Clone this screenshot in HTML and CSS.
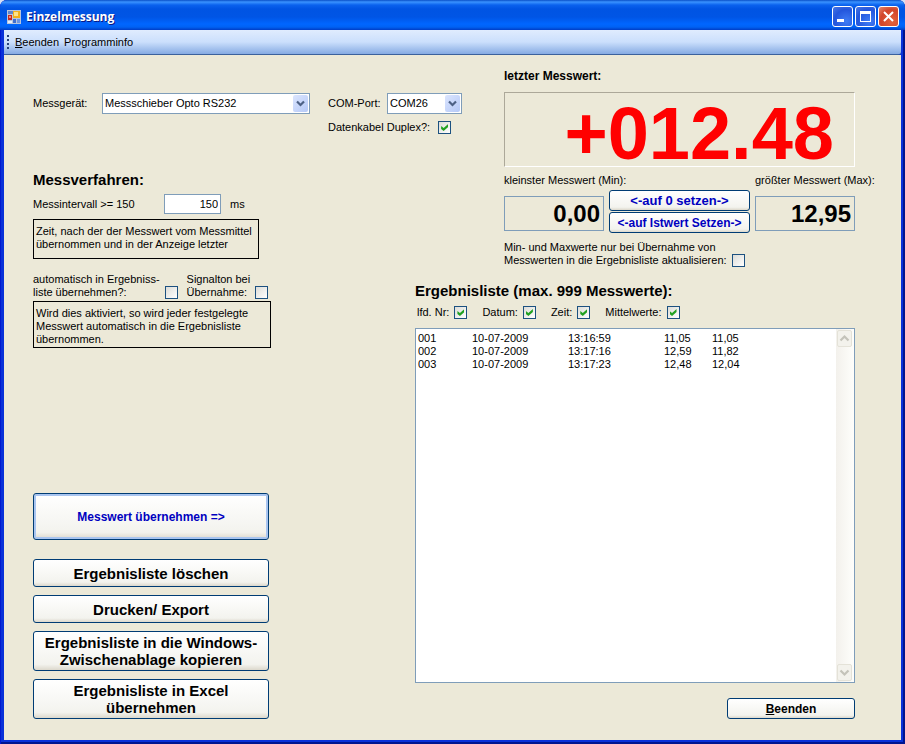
FILE: index.html
```html
<!DOCTYPE html>
<html lang="de">
<head>
<meta charset="UTF-8" />
<meta name="viewport" content="width=device-width, initial-scale=1" />
<title>Einzelmessung</title>
<link rel="stylesheet" href="styles.css">
</head>
<body>

<div class="window">
  <header class="titlebar">
    <svg class="app-icon" width="14" height="14" viewBox="0 0 14 14">
      <rect x="0" y="0" width="14" height="14" fill="#b9c6dc" />
      <rect x="1" y="1" width="5" height="3" fill="#5f86cf" />
      <rect x="1" y="5" width="4" height="5" fill="#c8281e" />
      <rect x="2" y="6" width="2" height="2" fill="#f0897c" />
      <rect x="6" y="1" width="7" height="7" fill="#f2b21c" />
      <rect x="7" y="2" width="4" height="4" fill="#fde28a" />
      <rect x="1" y="11" width="4" height="2" fill="#e8eefb" />
      <rect x="6" y="9" width="3" height="4" fill="#3f6fd0" />
      <rect x="10" y="9" width="3" height="4" fill="#6c96e4" />
    </svg>
    <h1>Einzelmessung</h1>
    <div class="window-buttons">
      <button type="button" aria-label="Minimieren">
        <svg width="19" height="19" viewBox="0 0 19 19"><rect x="4" y="12" width="7" height="3" fill="#fff" /></svg>
      </button>
      <button type="button" aria-label="Maximieren">
        <svg width="19" height="19" viewBox="0 0 19 19"><path d="M4 4h11v11H4zM5 7v7h9V7z" fill="#fff" fill-rule="evenodd" /></svg>
      </button>
      <button type="button" class="close" aria-label="Schließen">
        <svg width="19" height="19" viewBox="0 0 19 19"><path d="M5 5l9 9M14 5l-9 9" stroke="#fff" stroke-width="2" fill="none" /></svg>
      </button>
    </div>
  </header>

  <nav class="menubar">
    <span class="grip"></span>
    <button type="button"><u>B</u>eenden</button>
    <button type="button">Programminfo</button>
  </nav>

  <main class="content">
    <section class="device">
      <div class="field">
        <label for="geraet" class="device-label">Messgerät:</label>
        <span class="combo combo-wide">
          <select id="geraet"><option>Messschieber Opto RS232</option></select>
          <svg class="arrow" width="15" height="17" viewBox="0 0 15 17"><path d="M4 6.5l3.5 3.5L11 6.5" fill="none" stroke="#4d6185" stroke-width="2.2" /></svg>
        </span>
      </div>
      <div class="port">
        <div class="field">
          <label for="port" class="port-label">COM-Port:</label>
          <span class="combo">
            <select id="port"><option>COM26</option></select>
            <svg class="arrow" width="15" height="17" viewBox="0 0 15 17"><path d="M4 6.5l3.5 3.5L11 6.5" fill="none" stroke="#4d6185" stroke-width="2.2" /></svg>
          </span>
        </div>
        <label class="check">Datenkabel Duplex?: <input type="checkbox" checked></label>
      </div>
    </section>

    <section class="readings">
      <h3>letzter Messwert:</h3>
      <output class="display">+012.48</output>
      <div class="minmax">
        <label for="min">kleinster Messwert (Min):</label>
        <label for="max" class="max-label">größter Messwert (Max):</label>
        <input type="text" id="min" class="value" value="0,00" readonly>
        <div class="reset">
          <button type="button" class="btn zero">&lt;-auf 0 setzen-&gt;</button>
          <button type="button" class="btn">&lt;-auf Istwert Setzen-&gt;</button>
        </div>
        <input type="text" id="max" class="value" value="12,95" readonly>
      </div>
      <label class="check two-line">
        <span>Min- und Maxwerte nur bei Übernahme von<br>Messwerten in die Ergebnisliste aktualisieren:</span>
        <input type="checkbox">
      </label>
    </section>

    <section class="procedure">
      <h2>Messverfahren:</h2>
      <div class="field">
        <label for="intervall" class="interval-label">Messintervall &gt;= 150</label>
        <input type="text" id="intervall" class="interval" value="150">
        <span class="unit">ms</span>
      </div>
      <p class="hint hint-interval">Zeit, nach der der Messwert vom Messmittel<br>übernommen und in der Anzeige letzter</p>
      <div class="auto">
        <label class="check two-line">
          <span>automatisch in Ergebniss-<br>liste übernehmen?:</span>
          <input type="checkbox">
        </label>
        <label class="check two-line">
          <span>Signalton bei<br>Übernahme:</span>
          <input type="checkbox">
        </label>
      </div>
      <p class="hint hint-auto">Wird dies aktiviert, so wird jeder festgelegte<br>Messwert automatisch in die Ergebnisliste<br>übernommen.</p>

      <div class="actions">
        <button type="button" class="btn primary">Messwert übernehmen =&gt;</button>
        <button type="button" class="btn big">Ergebnisliste löschen</button>
        <button type="button" class="btn big">Drucken/ Export</button>
        <button type="button" class="btn big tall">Ergebnisliste in die Windows-<br>Zwischenablage kopieren</button>
        <button type="button" class="btn big tall">Ergebnisliste in Excel<br>übernehmen</button>
      </div>
    </section>

    <section class="results">
      <h2>Ergebnisliste (max. 999 Messwerte):</h2>
      <div class="columns">
        <label class="check">lfd. Nr: <input type="checkbox" checked></label>
        <label class="check">Datum: <input type="checkbox" checked></label>
        <label class="check">Zeit: <input type="checkbox" checked></label>
        <label class="check">Mittelwerte: <input type="checkbox" checked></label>
      </div>
      <div class="listbox">
        <table>
          <tr><td class="nr">001</td><td>10-07-2009</td><td>13:16:59</td><td class="num">11,05</td><td class="num">11,05</td></tr>
          <tr><td class="nr">002</td><td>10-07-2009</td><td>13:17:16</td><td class="num">12,59</td><td class="num">11,82</td></tr>
          <tr><td class="nr">003</td><td>10-07-2009</td><td>13:17:23</td><td class="num">12,48</td><td class="num">12,04</td></tr>
        </table>
        <div class="scrollbar">
          <button type="button" aria-label="Nach oben">
            <svg width="13" height="15" viewBox="0 0 13 15"><path d="M2.5 9.5l4-4 4 4" fill="none" stroke="#c4c3ba" stroke-width="2.2" /></svg>
          </button>
          <button type="button" aria-label="Nach unten">
            <svg width="13" height="15" viewBox="0 0 13 15"><path d="M2.5 5.5l4 4 4-4" fill="none" stroke="#c4c3ba" stroke-width="2.2" /></svg>
          </button>
        </div>
      </div>
      <button type="button" class="btn quit"><u>B</u>eenden</button>
    </section>
  </main>
</div>

</body>
</html>
```
FILE: styles.css
```css
* {
  box-sizing: border-box;
}
body {
  margin: 0;
  background: #d6e0f4;
  font-family: "Liberation Sans", Arial, sans-serif;
  font-size: 11px;
  line-height: 13px;
  color: #000;
}
button, input, select {
  font: inherit;
  color: inherit;
  margin: 0;
}
h1, h2, h3, p {
  margin: 0;
}

/* window frame */
.window {
  display: flex;
  flex-direction: column;
  min-height: 100vh;
  padding: 0 4px 4px;
  border-radius: 7px 7px 0 0;
  background: #0831d9;
  box-shadow: inset 1px 0 #0019cf, inset -2px -2px #001590;
}
.titlebar {
  display: flex;
  align-items: center;
  height: 30px;
  margin: 0 -4px;
  padding: 3px 6px 0 7px;
  border-radius: 7px 7px 0 0;
  background: linear-gradient(#0950c8 0, #3a93ff 2px, #0a62ee 5px, #0054e3 9px, #0055e5 17px, #0066ff 24px, #0062f4 27px, #003dc5 30px);
}
.app-icon {
  margin-right: 5px;
}
.titlebar h1 {
  flex: 1;
  font-family: "Open Sans", sans-serif;
  font-size: 12px;
  line-height: 16px;
  color: #fff;
  text-shadow: 1px 1px #0a1883;
}
.window-buttons {
  display: flex;
  gap: 2px;
}
.window-buttons button {
  width: 21px;
  height: 21px;
  padding: 0;
  border: 1px solid #fff;
  border-radius: 3px;
  background: radial-gradient(circle at 70% 75%, #3f7cf5, #2456dc 60%, #4a78e4);
}
.window-buttons .close {
  background: radial-gradient(circle at 70% 75%, #e4633c, #d2452a 60%, #e58a70);
}
.window-buttons svg {
  display: block;
}

.menubar {
  display: flex;
  align-items: center;
  height: 25px;
  padding-left: 3px;
  border-bottom: 1px solid #3b619c;
  border-radius: 0 0 3px 0;
  background: linear-gradient(#e0ecfe, #cbdffc 50%, #86abe3);
}
.grip {
  width: 2px;
  height: 14px;
  margin-right: 6px;
  background: repeating-linear-gradient(#27417a 0 2px, transparent 2px 4px);
}
.menubar button {
  margin-right: 5px;
  padding: 0;
  border: 0;
  background: none;
}

.content {
  flex: 1;
  display: grid;
  grid-template-columns: 382px 89px 1fr;
  grid-template-rows: 102px auto 1fr;
  padding: 14px 46px 21px 29px;
  background: #ece9d8;
}
h2 {
  font-size: 15px;
  line-height: 18px;
}
h3 {
  font-size: 12px;
  line-height: 14px;
}

/* controls */
.field {
  display: flex;
  align-items: center;
}
.check {
  display: inline-flex;
  align-items: center;
  gap: 8px;
}
.two-line {
  align-items: flex-end;
  gap: 5px;
}
input[type="checkbox"] {
  appearance: none;
  flex: none;
  width: 13px;
  height: 13px;
  border: 1px solid #1c5180;
  background: linear-gradient(135deg, #dcdcd7, #fff);
}
input[type="checkbox"]:checked::before {
  content: "";
  display: block;
  width: 7px;
  height: 7px;
  margin: 2px;
  background: #21a121;
  clip-path: polygon(0 29%, 36% 57%, 100% 0, 100% 43%, 36% 100%, 0 71%);
}
.combo {
  position: relative;
  width: 75px;
  height: 21px;
}
.combo-wide {
  width: 208px;
}
.combo select {
  appearance: none;
  width: 100%;
  height: 100%;
  padding: 0 18px 0 2px;
  border: 1px solid #7f9db9;
  border-radius: 0;
  background: #fff;
}
.arrow {
  position: absolute;
  top: 2px;
  right: 2px;
  border-radius: 2px;
  background: linear-gradient(135deg, #dbe5fe, #b5c9f7);
  pointer-events: none;
}
.btn {
  padding: 0 4px;
  border: 1px solid #003c74;
  border-radius: 3px;
  background: linear-gradient(#fff, #f3f3ee 85%, #dcd8cc);
  font-size: 12px;
  font-weight: bold;
  line-height: 14px;
}

.device {
  grid-area: 1 / 1 / 2 / 3;
  display: flex;
  align-items: flex-start;
  gap: 18px;
  padding-top: 24px;
}
.device-label {
  width: 69px;
}
.port-label {
  width: 59px;
}
.port .check {
  margin-top: 7px;
}

.readings {
  grid-area: 1 / 3 / 3 / 4;
  padding-bottom: 15px;
}
.display {
  display: block;
  height: 75px;
  margin-top: 9px;
  padding: 9px 20px 0 0;
  border: 1px solid;
  border-color: #aca899 #fff #fff #aca899;
  font-size: 74px;
  font-weight: bold;
  line-height: 64px;
  text-align: right;
  color: #f00;
}
.minmax {
  display: grid;
  grid-template-columns: 100px 1fr 100px;
  column-gap: 5px;
  row-gap: 3px;
  align-items: end;
  margin: 7px 0 8px;
  white-space: nowrap;
}
.max-label {
  grid-column: 3;
}
.value {
  width: 100%;
  height: 35px;
  margin-bottom: 2px;
  padding: 0 3px;
  border: 1px solid #7f9db9;
  background: transparent;
  font-size: 24px;
  font-weight: bold;
  text-align: right;
}
.reset {
  display: grid;
  gap: 1px;
}
.reset .btn {
  height: 21px;
  color: #0000c0;
}
.reset .zero {
  font-size: 13px;
}

.procedure {
  grid-area: 2 / 1 / 4 / 2;
  display: flex;
  flex-direction: column;
  align-items: flex-start;
}
.procedure .field {
  margin: 5px 0;
}
.interval-label {
  width: 131px;
}
.interval {
  width: 57px;
  height: 20px;
  padding: 0 2px;
  border: 1px solid #7f9db9;
  background: #fff;
  text-align: right;
}
.unit {
  margin-left: 9px;
}
.hint {
  padding: 5px 2px 1px;
  border: 1px solid #000;
  white-space: nowrap;
}
.hint-interval {
  width: 226px;
  height: 40px;
}
.auto {
  display: flex;
  gap: 9px;
  margin: 14px 0 2px;
}
.hint-auto {
  width: 238px;
}
.actions {
  display: flex;
  flex-direction: column;
  gap: 8px;
  width: 236px;
  margin-top: auto;
}
.primary {
  height: 47px;
  margin-bottom: 11px;
  color: #0000c0;
  box-shadow: inset 0 0 0 2px #a9c5f0;
}
.big {
  height: 28px;
  font-size: 15px;
  line-height: 17px;
  white-space: nowrap;
}
.tall {
  height: 40px;
}

.results {
  grid-area: 3 / 2 / 4 / 4;
  display: flex;
  flex-direction: column;
}
.columns {
  display: flex;
  gap: 15px;
  margin: 6px 0 9px;
  padding-left: 2px;
}
.columns .check {
  gap: 5px;
}
.listbox {
  flex: 1;
  display: flex;
  justify-content: space-between;
  align-items: flex-start;
  border: 1px solid #7f9db9;
  background: #fff;
}
.listbox table {
  margin: 3px 2px;
  border-collapse: collapse;
}
.listbox td {
  width: 96px;
  padding: 0;
}
.listbox .nr {
  width: 54px;
}
.listbox .num {
  width: 48px;
}
.scrollbar {
  align-self: stretch;
  display: flex;
  flex-direction: column;
  justify-content: space-between;
  width: 18px;
  padding: 1px;
  background: linear-gradient(90deg, #f3f1ec, #fefefb);
}
.scrollbar button {
  padding: 0;
  width: 15px;
  height: 17px;
  border: 1px solid #e4e2d8;
  border-radius: 2px;
  background: #f3f2ec;
}
.scrollbar svg {
  display: block;
}
.quit {
  align-self: flex-end;
  width: 128px;
  height: 21px;
  margin-top: 15px;
}
```
